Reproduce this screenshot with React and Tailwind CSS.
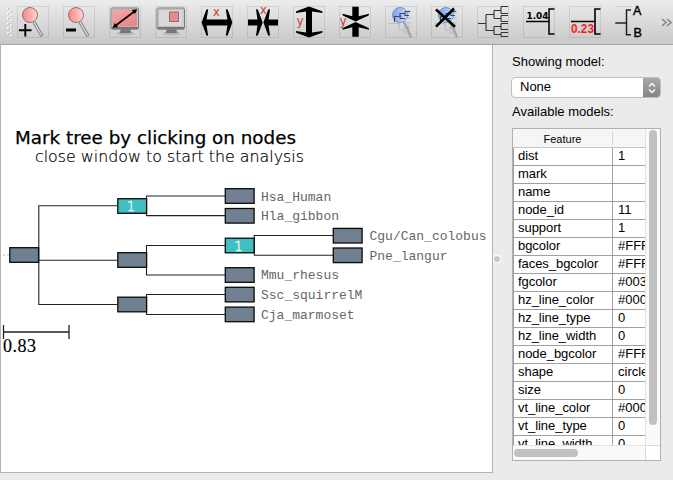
import React from "react";

const ROWS = [
  ["dist", "1"], ["mark", ""], ["name", ""], ["node_id", "11"], ["support", "1"],
  ["bgcolor", "#FFF"], ["faces_bgcolor", "#FFF"], ["fgcolor", "#003"],
  ["hz_line_color", "#000"], ["hz_line_type", "0"], ["hz_line_width", "0"],
  ["node_bgcolor", "#FFF"], ["shape", "circle"], ["size", "0"],
  ["vt_line_color", "#000"], ["vt_line_type", "0"], ["vt_line_width", "0"],
];

const Sans = '"Liberation Sans", Arial, sans-serif';

function Tool({ children, open }) {
  return (
    <svg viewBox="0 0 32 32" className="h-8 w-8 shrink-0 overflow-visible">
      {open ? (
        <path d="M17 0.5H0.5" fill="none" stroke="#000" strokeOpacity="0.09" />
      ) : (
        <rect x="0.5" y="0.5" width="31" height="31" fill="none" stroke="#000" strokeOpacity="0.09" />
      )}
      {children}
    </svg>
  );
}

function Lens() {
  return (
    <>
      <path d="M17 16L25 30" stroke="#777" strokeWidth="3.2" />
      <path d="M17 16L24.6 29.4" stroke="#d8d8d8" strokeWidth="1.5" />
      <circle cx="13" cy="9" r="7.5" fill="url(#pinkLens)" stroke="#8c7474" strokeWidth="1" />
    </>
  );
}

function Monitor({ fill }) {
  return (
    <>
      <ellipse cx="16.5" cy="27.5" rx="9" ry="1.8" fill="#000" opacity="0.12" />
      <path d="M12 23H21L22.5 27H10.5Z" fill="#777" />
      <rect x="2" y="2" width="27.5" height="21.2" rx="1.5" fill="#ddd" stroke="#777" />
      <rect x="3.5" y="3.5" width="24.5" height="17" fill={fill} stroke="#aaa" strokeWidth="0.6" />
      <path d="M2.5 22H29" stroke="#777" strokeWidth="2" />
    </>
  );
}

function BlueLens() {
  return (
    <>
      <path d="M4 17.5H14M14 17.5V24H19M14 20V17M19 5.5H26M19 21V27H24M19 21H24M22 12H26M22 17H25M24 4V8M24 19V23" fill="none" stroke="#bbb" strokeWidth="1" />
      <path d="M19 16L26 31" stroke="#8f8f8f" strokeWidth="2.2" />
      <path d="M19.2 17L25.8 30.6" stroke="#c4c4c4" strokeWidth="0.8" />
      <circle cx="15" cy="9" r="7.5" fill="url(#blueLens)" stroke="#7f93b5" strokeWidth="1" />
      <path d="M9.5 16V10.5H15M15 12.5V7.5H20M15 12.5H20M20 5.5H25M20 5.5V9.5H24" fill="none" stroke="#34496e" strokeWidth="1.1" />
      <rect x="14" y="9.2" width="2.4" height="2.4" fill="#f02a3a" />
    </>
  );
}

function Toolbar() {
  return (
    <header className="flex h-[45px] shrink-0 items-start border-b border-[#a5a5a5] bg-linear-to-b from-[#ececec] to-[#c9c9c9] pt-1.5">
      <svg className="ml-1.5 h-8 w-[11px] shrink-0">
        {[1, 6, 11, 16, 21, 26].map((y) => (
          <g key={y}>
            <rect x="1" y={y} width="2" height="2" fill="#fafafa" />
            <rect x="2.2" y={y + 1} width="1.4" height="1.4" fill="#bbb" />
            <rect x="4" y={y + 2.5} width="2" height="2" fill="#fafafa" />
            <rect x="5.2" y={y + 3.5} width="1.4" height="1.4" fill="#bbb" />
          </g>
        ))}
      </svg>
      <div className="flex gap-3.5">
        <Tool>
          <defs>
            <linearGradient id="pinkLens"><stop stopColor="#ff8585" /><stop offset="1" stopColor="#ffd5d2" /></linearGradient>
            <linearGradient id="pinkScreen" x2="0.7" y2="1"><stop stopColor="#f6aaaa" /><stop offset="1" stopColor="#e88585" /></linearGradient>
            <linearGradient id="blueLens" x2="1" y2="0.2"><stop stopColor="#6d9ff5" /><stop offset="1" stopColor="#c3dafd" /></linearGradient>
          </defs>
          <Lens />
          <path d="M8.3 18V30.5M2 24.3H14.5" stroke="#000" strokeWidth="1.9" />
        </Tool>
        <Tool>
          <Lens />
          <path d="M3 24H13" stroke="#000" strokeWidth="3" />
        </Tool>
        <Tool>
          <Monitor fill="url(#pinkScreen)" />
          <path d="M6 20L26 5" stroke="#000" strokeWidth="1.6" />
          <path d="M3.5 21.8L5.8 17L9.2 21ZM28.3 3.3L26 8L22.6 4Z" />
        </Tool>
        <Tool>
          <Monitor fill="#d9d9d9" />
          <rect x="14.5" y="6" width="9" height="9.5" fill="#e88b8b" stroke="#9a6b6b" />
        </Tool>
        <Tool>
          <path d="M0.6 16.5L5.4 3.6L7.2 3.3L5.6 13.6H26.4L24.8 3.3L26.6 3.6L31.4 16.5L26.6 29.4L24.8 29.8L26.4 19.4H5.6L7.2 29.8L5.4 29.4Z" />
          <text x="15.4" y="10" textAnchor="middle" fontFamily="DejaVu Sans" fontSize="11.5" fill="#c93636">x</text>
        </Tool>
        <Tool>
          <path d="M1 13.6H10.4L9 3.3L10.8 3.6L15.7 16.5L10.8 29.4L9 29.8L10.4 19.4H1Z" />
          <path d="M31 13.6H21.6L23 3.3L21.2 3.6L16.4 16.5L21.2 29.4L23 29.8L21.6 19.4H31Z" />
          <text x="16.3" y="8.3" textAnchor="middle" fontFamily="DejaVu Sans" fontSize="11.5" fill="#c93636">x</text>
        </Tool>
        <Tool>
          <path d="M16 0.5L29.2 5.2L29.5 7L19 5.6V26.4L29.5 25L29.2 26.8L16 31.5L3.2 26.8L3 25L13 26.4V5.6L3 7L3.2 5.2Z" />
          <text x="7.2" y="18.7" textAnchor="middle" fontFamily="DejaVu Sans" fontSize="11.5" fill="#c93636">y</text>
        </Tool>
        <Tool>
          <path d="M13.3 0.7H19.7V10.2L30 7.7L29.7 9.6L16.6 15.5L3.8 9.6L3.5 7.7L13.3 10.2Z" />
          <path d="M13.3 30.7H19.7V21.3L30 23.8L29.7 22L16.6 16L3.8 22L3.5 23.8L13.3 21.3Z" />
          <text x="4.2" y="18.7" textAnchor="middle" fontFamily="DejaVu Sans" fontSize="11.5" fill="#c93636">y</text>
        </Tool>
        <Tool><BlueLens /></Tool>
        <Tool>
          <BlueLens />
          <path d="M5 3.5L24 20.7M23 2.5L5 20.7" stroke="#000" strokeWidth="2.6" />
        </Tool>
        <Tool>
          <path d="M1 17.5H9M9 8.5V24.5H17M9 8.5H17M17 4.5V12.5M17 4.5H24M17 12.5H24M24 0.5V7.5M24 0.5H31M24 7.5H31M24 9.5V15.5M24 9.5H31M24 15.5H31M17 20.5V28.5M17 20.5H24M17 28.5H24M24 17.5V23.5M24 17.5H31M24 23.5H31M24 26.5V30.5M24 26.5H31M24 30.5H31" fill="none" stroke="#333" strokeWidth="1.1" />
        </Tool>
        <Tool>
          <text x="3.5" y="12.9" fontFamily="DejaVu Sans" fontWeight="700" fontSize="9.5" textLength="22" lengthAdjust="spacingAndGlyphs">1.04</text>
          <path d="M3 15.5H26M31.5 3H26V28H31.5" fill="none" stroke="#000" strokeWidth="1.5" />
        </Tool>
        <Tool>
          <text x="2" y="26.5" fontFamily={Sans} fontWeight="700" fontSize="12" textLength="23" lengthAdjust="spacingAndGlyphs" fill="#fb1b1b">0.23</text>
          <path d="M2 15.5H26M31.5 3H26V28H31.5" fill="none" stroke="#000" strokeWidth="1.6" />
        </Tool>
        <Tool open>
          <path d="M0.3 17H11.5M16 4H11.5V28.7H16" fill="none" stroke="#222" strokeWidth="1.5" />
          <g fontFamily={Sans} fontSize="12.5" stroke="#000" strokeWidth="0.45">
            <text x="18" y="9.3">A</text>
            <text x="18.5" y="30.7">B</text>
          </g>
        </Tool>
      </div>
      <svg className="ml-3.5 mt-3 h-3 w-3 shrink-0" fill="none" stroke="#858585" strokeWidth="1.6">
        <path d="M1 1L5 4.5L1 8M6 1L10 4.5L6 8" />
      </svg>
    </header>
  );
}

const NODES = [
  [9.5, 255], [117.5, 206, 1], [117.5, 260], [117.5, 304.5],
  [225, 196], [225, 215.8], [225, 245.5, 1], [225, 275], [225, 294.6], [225, 314.4],
  [333, 235.7], [333, 255.3],
];

const LEAVES = [
  [261, 200.8, "Hsa_Human"], [261, 220, "Hla_gibbon"], [369.5, 240, "Cgu/Can_colobus"],
  [369.5, 260, "Pne_langur"], [261, 279, "Mmu_rhesus"], [261, 299, "Ssc_squirrelM"], [261, 319, "Cja_marmoset"],
];

function TreeView() {
  return (
    <main className="h-[428px] w-[493px] shrink-0 border border-t-0 border-[#b4b4b4] bg-white">
      <svg viewBox="1 45 491 427" className="block h-[427px] w-[491px]">
        <text x="15" y="144" fontFamily="DejaVu Sans" fontSize="17.5" textLength="281" lengthAdjust="spacingAndGlyphs" stroke="#000" strokeWidth="0.25">Mark tree by clicking on nodes</text>
        <text x="35" y="162" fontFamily="DejaVu Sans" fontWeight="200" fontSize="16" textLength="269" lengthAdjust="spacingAndGlyphs" fill="#000" stroke="#000" strokeWidth="0.2">close window to start the analysis</text>
        <path d="M3 255H9" stroke="#bbb" strokeDasharray="2 2" />
        <g fill="none" stroke="#222" strokeWidth="1.1">
          <path d="M117 205.8H38.8V304.5H117M38.8 260.3H117" />
          <path d="M225 196H146.5V215.6H225M225 245.5H146.5V275H225M225 294.5H146.5V314.5H225M333 235.5H254.3V255.3H333" />
        </g>
        {NODES.map(([x, y, marked], i) => (
          <g key={i}>
            <rect x={x + 0.3} y={y - 7.3} width="28.8" height="14.6" fill={marked ? "#40bfc1" : "#708090"} stroke="#0a0a0a" strokeWidth="1.3" />
            {marked && <text x={x + 13.5} y={y + 5} textAnchor="middle" fontFamily="DejaVu Sans" fontWeight="200" fontSize="14" fill="#fff" stroke="#fff" strokeWidth="0.3">1</text>}
          </g>
        ))}
        <g fontFamily="Liberation Mono, monospace" fontSize="13" fill="#666">
          {LEAVES.map(([x, y, name]) => <text key={name} x={x} y={y}>{name}</text>)}
        </g>
        <path d="M3.5 332H69M3.5 325V339M69 325V339" stroke="#222" strokeWidth="1.3" />
        <text x="3" y="352" fontFamily="Liberation Serif, serif" fontSize="18" textLength="33" stroke="#000" strokeWidth="0.2">0.83</text>
      </svg>
    </main>
  );
}

function ModelPanel() {
  return (
    <aside className="ml-[11px] w-[149px] shrink-0 pt-[9px] text-[13px]">
      <div className="h-[23px] whitespace-nowrap leading-4">Showing model:</div>
      <div className="-ml-px flex h-[21px] w-[150px] overflow-hidden rounded border border-[#bdbdbd] bg-white">
        <span className="flex-1 pl-2 leading-[17px]">None</span>
        <span className="flex w-[17px] items-center justify-center bg-linear-to-b from-[#a9a9ac] to-[#858589]">
          <svg className="h-3 w-2" fill="none" stroke="#fff" strokeWidth="1.4"><path d="M1 4.5L4 1.5L7 4.5M1 7.5L4 10.5L7 7.5" /></svg>
        </span>
      </div>
      <div className="mt-1.5 h-6 whitespace-nowrap leading-4">Available models:</div>
      <div className="grid h-[333px] grid-cols-[132px_1fr] grid-rows-[316px_1fr] border border-[#b0b0b0] bg-white">
        <div className="overflow-hidden">
          <div className="flex h-[19px] border-b border-[#c6c6c6] bg-[#f6f6f6] text-[11px] leading-[19px]">
            <div className="my-0.5 w-[100px] border-r border-[#d5d5d5] text-center leading-[16px]">Feature</div>
          </div>
          <div className="border-l border-[#a0a0a0]">
            {ROWS.map(([name, value]) => (
              <div key={name} className="flex h-[18px] whitespace-nowrap border-b border-[#a0a0a0] leading-4">
                <span className="w-[99px] shrink-0 border-r border-[#a0a0a0] pl-1 tracking-[-0.05px]">{name}</span>
                <span className="pl-[5px]">{value}</span>
              </div>
            ))}
          </div>
        </div>
        <div className="flex justify-center border-l border-[#e3e3e3] bg-[#fafafa] pt-px">
          <div className="h-[295px] w-2 rounded-full bg-[#c1c1c1]" />
        </div>
        <div className="border-t border-[#e3e3e3] bg-[#fafafa] pl-px pt-[3px]">
          <div className="h-2 w-16 rounded-full bg-[#c1c1c1]" />
        </div>
        <div className="border-l border-t border-[#d8d8d8] bg-white" />
      </div>
    </aside>
  );
}

export default function App() {
  return (
    <div className='flex h-[480px] w-[673px] flex-col overflow-hidden bg-[#ebebeb] font-["Liberation_Sans",Arial,sans-serif] text-black'>
      <Toolbar />
      <div className="flex min-h-0 flex-1">
        <TreeView />
        <div className="flex h-[428px] w-2 items-center">
          <div className="flex h-2 w-2 items-center justify-center bg-[#f8f8f8]">
            <div className="h-1.5 w-1.5 rounded-full bg-[#c8c8c8]" />
          </div>
        </div>
        <ModelPanel />
      </div>
    </div>
  );
}
